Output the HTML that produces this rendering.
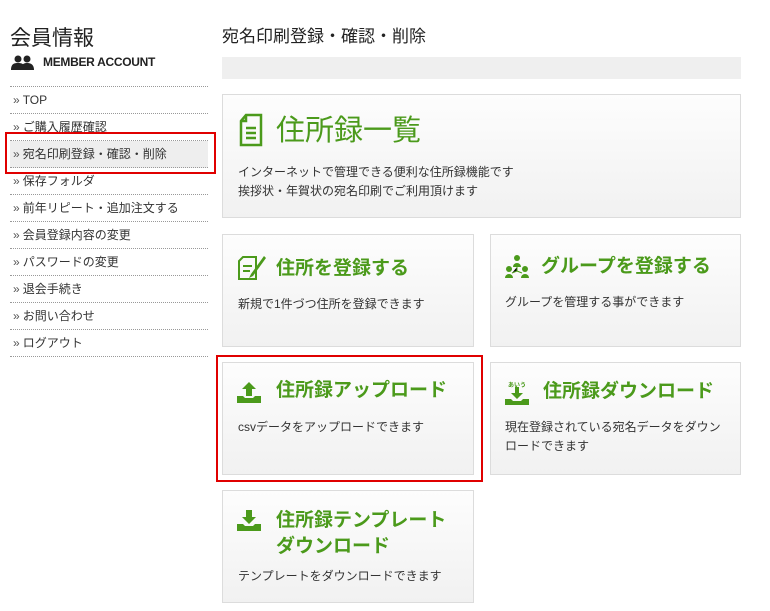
<!DOCTYPE html>
<html><head><meta charset="utf-8"><style>
*{margin:0;padding:0;box-sizing:border-box}
body{width:770px;height:611px;background:#fff;font-family:"Liberation Sans","Noto Sans CJK JP",sans-serif;color:#222;position:relative;overflow:hidden}
.a{position:absolute}
.nav{position:absolute;left:10px;width:198px;font-size:12px;height:27px;line-height:27px;border-bottom:1px dotted #999;padding-left:3px;color:#333}
.nav:before{content:"»";color:#555;margin-right:3px}
.card{position:absolute;border:1px solid #dcdcdc;background:linear-gradient(#fdfdfd,#f1f1f1)}
.t{position:absolute;color:#4b9a1b;font-weight:600;font-size:19px;line-height:26px}
.d{position:absolute;font-size:12px;line-height:19px;color:#333}
.red{position:absolute;border:2px solid #e00000}
</style></head><body>
<div class="a" style="left:10px;top:22px;font-size:21px">会員情報</div>
<svg class="a" style="left:11px;top:55px" width="24" height="15" viewBox="0 0 24 15"><circle cx="7" cy="4" r="3.5" fill="#222"/><path d="M0 15c0-6 3-7 7-7s7 1 7 7z" fill="#222"/><circle cx="16" cy="4" r="3.5" fill="#222"/><path d="M10 15c0-6 3-7 6-7s7 1 7 7z" fill="#222"/></svg>
<div class="a" style="left:43px;top:55px;font-size:12px;font-weight:bold;letter-spacing:-0.3px">MEMBER ACCOUNT</div>
<div class="a" style="left:10px;top:86px;width:198px;border-top:1px dotted #999"></div>
<div class="nav" style="top:87px">TOP</div>
<div class="nav" style="top:114px">ご購入履歴確認</div>
<div class="nav" style="top:141px;background:#eee">宛名印刷登録・確認・削除</div>
<div class="nav" style="top:168px">保存フォルダ</div>
<div class="nav" style="top:195px">前年リピート・追加注文する</div>
<div class="nav" style="top:222px">会員登録内容の変更</div>
<div class="nav" style="top:249px">パスワードの変更</div>
<div class="nav" style="top:276px">退会手続き</div>
<div class="nav" style="top:303px">お問い合わせ</div>
<div class="nav" style="top:330px">ログアウト</div>
<div class="red" style="left:5px;top:132px;width:211px;height:42px"></div>

<div class="a" style="left:222px;top:22px;font-size:17px">宛名印刷登録・確認・削除</div>
<div class="a" style="left:222px;top:57px;width:519px;height:22px;background:#efefef"></div>

<div class="card" style="left:222px;top:94px;width:519px;height:124px"></div>
<svg class="a" style="left:238px;top:113px" width="26" height="34" viewBox="0 0 26 34"><path d="M8 2h15v30H3V8z M8 2v6H3" fill="none" stroke="#4b9a1b" stroke-width="2.5"/><path d="M8 15h10M8 20h10M8 25h10" stroke="#4b9a1b" stroke-width="2.5"/></svg>
<div class="t" style="left:276px;top:111px;font-size:29px;line-height:40px;font-weight:normal">住所録一覧</div>
<div class="d" style="left:238px;top:163px">インターネットで管理できる便利な住所録機能です<br>挨拶状・年賀状の宛名印刷でご利用頂けます</div>

<div class="card" style="left:222px;top:234px;width:252px;height:113px"></div>
<svg class="a" style="left:237px;top:254px" width="30" height="28" viewBox="0 0 30 28"><path d="M6 3h13v22H2V7z" fill="none" stroke="#4b9a1b" stroke-width="2"/><path d="M6 12h9M6 17h7" stroke="#4b9a1b" stroke-width="2"/><path d="M27 2L14 20l-2 4 4-2L29 4z" fill="#4b9a1b"/></svg>
<div class="t" style="left:276px;top:256px">住所を登録する</div>
<div class="d" style="left:238px;top:295px">新規で1件づつ住所を登録できます</div>

<div class="card" style="left:490px;top:234px;width:251px;height:113px"></div>
<svg class="a" style="left:505px;top:254px" width="24" height="26" viewBox="0 0 24 26"><circle cx="12" cy="4" r="3" fill="#4b9a1b"/><path d="M8 13a4 4 0 0 1 8 0z" fill="#4b9a1b"/><circle cx="4" cy="15" r="3" fill="#4b9a1b"/><path d="M0 24a4 4 0 0 1 8 0z" fill="#4b9a1b"/><circle cx="20" cy="15" r="3" fill="#4b9a1b"/><path d="M16 24a4 4 0 0 1 8 0z" fill="#4b9a1b"/><path d="M12 13v4l-5 2M12 17l5 2" stroke="#4b9a1b" stroke-width="1"/></svg>
<div class="t" style="left:541px;top:254px">グループを登録する</div>
<div class="d" style="left:505px;top:293px">グループを管理する事ができます</div>

<div class="card" style="left:222px;top:362px;width:252px;height:113px"></div>
<svg class="a" style="left:237px;top:381px" width="24" height="22" viewBox="0 0 24 22"><path d="M12 1l7 7h-4v7H9V8H5z" fill="#4b9a1b"/><path d="M0 15h6l2 2h8l2-2h6v7H0z" fill="#4b9a1b"/></svg>
<div class="t" style="left:276px;top:378px">住所録アップロード</div>
<div class="d" style="left:238px;top:418px">csvデータをアップロードできます</div>
<div class="red" style="left:216px;top:355px;width:267px;height:127px"></div>

<div class="card" style="left:490px;top:362px;width:251px;height:113px"></div>
<div class="a" style="left:508px;top:380px;font-size:6px;color:#4b9a1b;font-weight:bold">あいう</div>
<svg class="a" style="left:505px;top:387px" width="24" height="18" viewBox="0 0 24 18"><path d="M10 0h4v6h4l-6 6-6-6h4z" fill="#4b9a1b"/><path d="M0 12h6l2 2h8l2-2h6v6H0z" fill="#4b9a1b"/></svg>
<div class="t" style="left:543px;top:379px">住所録ダウンロード</div>
<div class="d" style="left:505px;top:418px;width:225px">現在登録されている宛名データをダウンロードできます</div>

<div class="card" style="left:222px;top:490px;width:252px;height:113px"></div>
<svg class="a" style="left:237px;top:509px" width="24" height="22" viewBox="0 0 24 22"><path d="M9 1h6v7h4l-7 7-7-7h4z" fill="#4b9a1b"/><path d="M0 15h6l2 2h8l2-2h6v7H0z" fill="#4b9a1b"/></svg>
<div class="t" style="left:276px;top:508px">住所録テンプレート<br>ダウンロード</div>
<div class="d" style="left:238px;top:567px">テンプレートをダウンロードできます</div>
</body></html>
